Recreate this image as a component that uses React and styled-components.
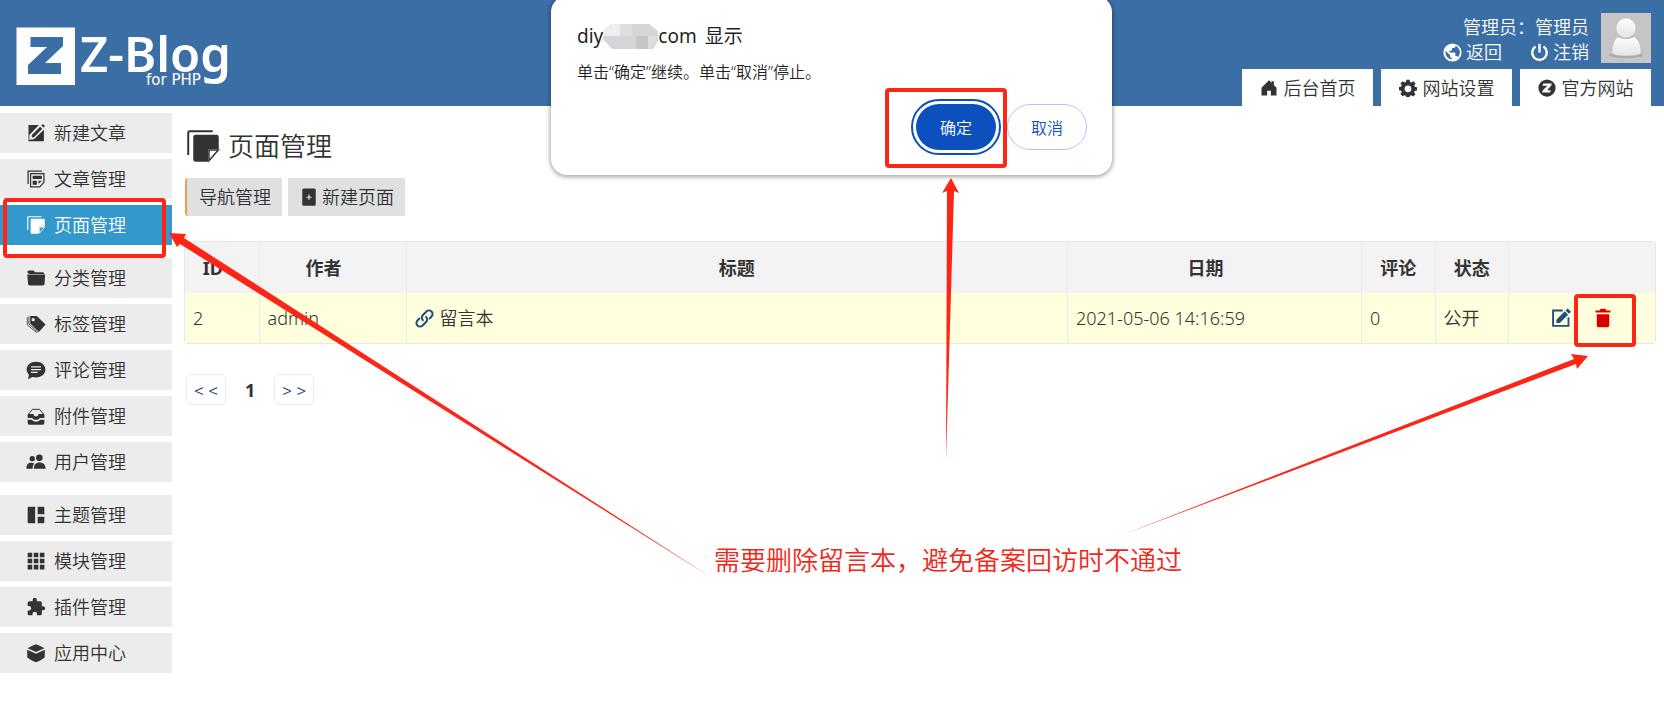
import styled, { createGlobalStyle } from 'styled-components'

const GlobalStyle = createGlobalStyle`
  * {
    box-sizing: border-box;
  }

  body {
    margin: 0;
    background: #FFFFFF;
    color: #333333;
    font-family: "Noto Sans", "Noto Sans CJK SC", sans-serif;
    font-size: 18px;
    font-weight: 350;
    line-height: 26px;
  }

  a {
    color: inherit;
    text-decoration: none;
  }
`

const Page = styled.div`
  position: relative;
  overflow: hidden;
  padding-bottom: 36px;
`

const Header = styled.header`
  display: flex;
  justify-content: space-between;
  height: 106px;
  padding: 13px 13px 0 16px;
  background: #3A6EA5;
  color: #FFFFFF;
`

const Logo = styled.a`
  svg {
    display: block;
  }
`

const HeaderSide = styled.div`
  display: flex;
  flex-direction: column;
  align-items: flex-end;
  justify-content: space-between;
`

const User = styled.div`
  display: flex;
  gap: 12px;

  .info {
    display: flex;
    flex-direction: column;
    align-items: flex-end;
    padding-top: 2px;
    line-height: 25px;
  }

  .links {
    display: flex;
    gap: 28px;
  }

  .links a {
    display: flex;
    align-items: center;
    gap: 4px;
  }
`

const TopMenu = styled.nav`
  display: flex;
  gap: 8px;

  a {
    display: flex;
    align-items: center;
    justify-content: center;
    gap: 6px;
    width: 131px;
    height: 37px;
    background: #FFFFFF;
    color: #333333;
  }
`

const Body = styled.div`
  display: flex;
  gap: 12px;
`

const Sidebar = styled.nav`
  display: flex;
  flex-direction: column;
  flex: none;
  gap: 13px;
  width: 172px;
  padding-top: 7px;
`

const MenuGroup = styled.div`
  display: flex;
  flex-direction: column;
  gap: 6px;
`

const MenuItem = styled.a`
  position: relative;
  display: flex;
  align-items: center;
  gap: 8px;
  height: 40px;
  padding-left: 26px;
  background: ${props => props.$active ? '#3399CC' : '#ECECEC'};
  && {
    color: ${props => props.$active ? '#FFFFFF' : '#333333'};
  }
`

const Main = styled.main`
  flex: 1;
  min-width: 0;
  padding: 20px 8px 0 0;
`

const Title = styled.h1`
  display: flex;
  align-items: center;
  gap: 7px;
  margin: 0 0 12px;
  padding-left: 1px;
  font-size: 26px;
  font-weight: 350;
  line-height: 40px;
`

const SubMenu = styled.div`
  display: flex;
  gap: 6px;
  margin-bottom: 25px;
  padding-left: 1px;
`

const SubButton = styled.a`
  display: flex;
  align-items: center;
  gap: 4px;
  height: 38px;
  padding: 0 11px 0 12px;
  background: #DEE0E2;
  border-left: ${props => props.$current ? '2px solid #EDA04A' : '0'};
  border-radius: ${props => props.$current ? '3px 0 0 3px' : '0'};
`

const Table = styled.table`
  width: 100%;
  table-layout: fixed;
  border-collapse: separate;
  border-spacing: 0;
  border: 1px solid #E8E8E8;
  border-radius: 3px;

  th, td {
    height: 50px;
    padding: 0 8px;
    border-left: 1px solid #EBEBEB;
  }

  th:first-child, td:first-child {
    border-left: 0;
  }

  th {
    height: 51px;
    background: #F3F3F3;
    font-weight: 700;
    text-align: center;
  }

  th.sortable {
    padding-right: 26px;
  }

  td {
    background: #FFFFDD;
  }

  .title {
    display: flex;
    align-items: center;
    gap: 6px;
  }

  .actions {
    display: flex;
    justify-content: center;
    gap: 22px;
  }

  .actions a {
    position: relative;
    display: flex;
  }
`

const Pager = styled.nav`
  display: flex;
  align-items: center;
  gap: 19px;
  margin-top: 30px;
  padding-left: 2px;

  a {
    width: 40px;
    height: 31px;
    border: 1px solid #EBEBEB;
    border-radius: 5px;
    color: #1D4C7D;
    font-family: "Open Sans", sans-serif;
    font-size: 17px;
    font-weight: 400;
    line-height: 31px;
    text-align: center;
  }

  strong {
    font-weight: 700;
  }
`

const Dialog = styled.section`
  position: absolute;
  top: -4px;
  left: 50%;
  display: flex;
  flex-direction: column;
  width: 561px;
  height: 179px;
  margin-left: -281px;
  padding: 27px 25px 25px 26px;
  background: #FFFFFF;
  border-radius: 16px;
  box-shadow: 0 1px 4px 1px rgba(0, 0, 0, 0.35);
  color: #1F1F1F;

  h2 {
    display: flex;
    align-items: center;
    margin: 0;
    font-size: 19px;
    font-weight: 400;
    line-height: 26px;
  }

  h2 span {
    margin-left: 8px;
  }

  p {
    margin: 11px 0 0;
    font-size: 16px;
    line-height: 24px;
  }
`

const DialogButtons = styled.div`
  display: flex;
  justify-content: flex-end;
  gap: 11px;
  margin-top: auto;
`

const DialogButton = styled.button`
  position: relative;
  width: 80px;
  height: 46px;
  padding: 0;
  background: ${props => props.$primary ? '#0B50BC' : '#FFFFFF'};
  border: ${props => props.$primary ? '0' : '1px solid #A8C7FA'};
  border-radius: 23px;
  outline: ${props => props.$primary ? '2px solid #0B50BC' : 'none'};
  outline-offset: 3px;
  color: ${props => props.$primary ? '#FFFFFF' : '#0B50BC'};
  font-family: inherit;
  font-size: 16px;
  font-weight: 350;
`

/* red frame drawn around the control it sits in */
const Mark = styled.span`
  position: absolute;
  inset: ${props => props.$inset};
  z-index: 2;
  border: 4px solid #FD2516;
  border-radius: 4px;
  pointer-events: none;
`

const Arrows = styled.svg`
  position: absolute;
  top: 0;
  left: 0;
  z-index: 3;
  pointer-events: none;
`

const Note = styled.p`
  position: absolute;
  top: 541px;
  left: 714px;
  margin: 0;
  color: #F0281A;
  font-size: 26px;
  line-height: 38px;
  white-space: nowrap;
`

const icons = {
  edit: <><path d="M3 2.500h12.500L4 14.500V20l5.500-.5L21.500 8v14H3z" /><path d="M7 14.500 17 4.500l2.500 2.500L9.500 17H7zM18.500 3l1.800-1.800 2.500 2.500L21 5.500z" /></>,
  posts: <><path d="M2.500 18V2.500H19M5.500 5.500h16V16l-5 5.500h-11z" fill="none" stroke="currentColor" strokeWidth="1.500" /><path d="M8 8h11v4H8zM8 14h5v5H8zM15 14h4l-4 4z" /></>,
  pages: <><path d="M1.500 18V3A1.500 1.500 0 0 1 3 1.500h15.500v1.300H3.300a.5.5 0 0 0-.5.5V18z" /><path d="M7 4.500h14A1.500 1.500 0 0 1 22.500 6v8h-7v8.500H7A1.500 1.500 0 0 1 5.500 21V6A1.500 1.500 0 0 1 7 4.500z" /><path d="M16 14.700h6.200L16 21.800z" fill="none" stroke="currentColor" strokeWidth="1" /></>,
  folder: <path d="M1.500 5a2 2 0 0 1 2-2H9l2 2h9a2 2 0 0 1 2 2v.3H3v-1zM1.500 7.800h21.500l-.7 11.200a2 2 0 0 1-2 2H4.500a2 2 0 0 1-2-2z" />,
  tag: <><path fillRule="evenodd" d="M5 2.500h8l10.500 10-8 9L5 11.500zM8.700 4.800a2 2 0 1 0 0 4 2 2 0 0 0 0-4z" /><path d="M1.500 4v9L13 22.500M3.500 3v9L14.500 22" fill="none" stroke="currentColor" /></>,
  comment: <path fillRule="evenodd" d="M12 2C5.500 2 .8 6 .8 11.500c0 2.600 1 4.500 2.700 6.200L2.500 23l5.300-2.500c1.300.3 2.700.5 4.200.5 6.500 0 11.200-4 11.200-9.500S18.500 2 12 2zM6 7.500h12V9H6zm0 3.300h12v1.500H6zM6 14h8v1.500H6z" />,
  tray: <><path d="M3 10 7.500 4h9l4.500 6" fill="none" stroke="currentColor" strokeWidth="1.200" /><path d="M2 9.500h7c0 4 6 4 6 0h7v4.800h-5.500c-1.500 3-7.500 3-9 0H2z" /><path d="M2 16.500h5c2 3 8 3 10 0h5v4a2 2 0 0 1-2 2H4a2 2 0 0 1-2-2z" /></>,
  users: <><circle cx="7.500" cy="8" r="3.200" /><circle cx="16" cy="7" r="4" /><path d="M.5 20c0-5 2-7 6-7 1.500 0 2.500.3 3.300 1C8.500 15.500 8 17.500 8 20zM9.500 20c0-5 2-7.500 6.700-7.500S23.500 15 23.500 20z" /></>,
  theme: <path d="M2 3.500A1.500 1.500 0 0 1 3.500 2H11v20H3.500A1.500 1.500 0 0 1 2 20.500zM14 2h6.500A1.500 1.500 0 0 1 22 3.500V11h-8zM14 14h8v6.500a1.500 1.500 0 0 1-1.500 1.500H14z" />,
  grid: <path d="M2 2h5.500v5.500H2zM9.300 2h5.500v5.500H9.300zM16.600 2h5.500v5.500h-5.500zM2 9.300h5.500v5.500H2zM9.300 9.300h5.500v5.500H9.300zM16.600 9.300h5.500v5.500h-5.500zM2 16.600h5.500v5.500H2zM9.300 16.600h5.500v5.500H9.300zM16.600 16.600h5.500v5.500h-5.500z" />,
  plugin: <path d="M20.500 11H19V7a2 2 0 0 0-2-2h-4V3.500a2.500 2.500 0 0 0-5 0V5H4a2 2 0 0 0-2 2v3.800h1.500a2.700 2.700 0 0 1 0 5.400H2V20c0 1.100.9 2 2 2h3.800v-1.500a2.700 2.700 0 0 1 5.400 0V22H17a2 2 0 0 0 2-2v-4h1.500a2.500 2.500 0 0 0 0-5z" />,
  box: <path d="M7.500 3.200 12 1.500l4.500 1.700 5.500 3-10 4.600L2 6.200zM1.500 8 12 13l10.500-5v9.500L17 21l-5 2-5-2-5.500-3.500z" />,
  home: <path d="M12 1.500 2 11.500V22h7.500v-6.500h5V22H22V11.500L18.500 8V3h-3v2z" />,
  gear: <path fillRule="evenodd" d="m9.800 1h4.400l.6 3 1.700.8 2.600-1.800 3 3-1.800 2.600.7 1.800 3 .6v4.400l-3 .6-.7 1.700 1.700 2.600-3 3-2.600-1.700-1.700.7-.6 3H9.800l-.6-3-1.700-.7L4.900 23l-3-3 1.700-2.600-.7-1.700-3-.6v-4.400l3-.6.7-1.800L1.900 6l3-3 2.600 1.800L9.200 4zM12 8.500a4.500 4.500 0 1 0 0 9 4.500 4.500 0 0 0 0-9z" />,
  zblog: <path fillRule="evenodd" d="M12 .5a11.500 11.500 0 1 0 0 23 11.500 11.500 0 0 0 0-23zM7 6h11.500L17.500 9l-5.500 6h5L16 18H5.500l1-3 6-6H6z" />,
  globe: <path fillRule="evenodd" d="M12 .5a11.500 11.500 0 1 0 0 23 11.500 11.500 0 0 0 0-23zm-1 20.300a9 9 0 0 1-7.600-10.900L9 15.500v1.200c0 1.200.8 2 2 2zm7.800-2.700c-.3-1-1.200-1.600-2.200-1.600h-1v-3.300c0-.7-.5-1.200-1.200-1.200H8V9.700h2.200c.7 0 1.200-.5 1.200-1.100V6.300h2.200c1.200 0 2.200-1 2.200-2.200v-.5a9 9 0 0 1 3 14.500z" />,
  power: <><path d="M7 4.500a9.200 9.200 0 1 0 10 0" fill="none" stroke="currentColor" strokeWidth="3" /><path d="M10.500 1h3v11h-3z" /></>,
  addPage: <path fillRule="evenodd" d="M5 .5h14a2 2 0 0 1 2 2v19a2 2 0 0 1-2 2H5a2 2 0 0 1-2-2v-19a2 2 0 0 1 2-2zm6.200 8.300v2.700H8.500v1.600h2.700v2.700h1.600v-2.700h2.700v-1.600h-2.700V8.800z" />,
  link: <g fill="none" stroke="currentColor" strokeWidth="2.500" strokeLinecap="round"><path d="M10 14a4.500 4.500 0 0 1 0-6.400l4.500-4.500a4.500 4.500 0 0 1 6.400 6.400L18.500 12" /><path d="M14 10a4.500 4.500 0 0 1 0 6.400l-4.500 4.500a4.500 4.500 0 0 1-6.400-6.400L5.500 12" /></g>,
  compose: <><path d="M14 3H2.500v18.500H21V11" fill="none" stroke="currentColor" strokeWidth="2.200" /><path d="M6.500 14 16.500 4l4 4-10 10h-4zM17.500 3 20 .5l4 4L21.500 7z" /></>,
  trash: <path d="M3 3h5l1-2h6l1 2h5v2.500H3zM4.500 7.500h15V21a2 2 0 0 1-2 2h-11a2 2 0 0 1-2-2z" />
}

function Icon({ name, size = 20, color = 'currentColor' }) {
  return (
    <svg width={size} height={size} viewBox="0 0 24 24" fill="currentColor" color={color} aria-hidden="true">
      {icons[name]}
    </svg>
  )
}

const menu = [
  [['edit', '新建文章'], ['posts', '文章管理'], ['pages', '页面管理']],
  [['folder', '分类管理'], ['tag', '标签管理'], ['comment', '评论管理'], ['tray', '附件管理'], ['users', '用户管理']],
  [['theme', '主题管理'], ['grid', '模块管理'], ['plugin', '插件管理'], ['box', '应用中心']]
]

function BlogLogo() {
  return (
    <svg width="230" height="92" viewBox="0 0 230 92" fill="#FFFFFF" role="img" aria-label="Z-Blog for PHP">
      <path fillRule="evenodd" d="M.5 14.500h58.500v57.500H.5zM14.500 24v10h16.500L12 52v9h33V50H29l18-17v-9z" />
      <text x="64" y="59" fontSize="49" fontWeight="600" fontFamily="Noto Sans, sans-serif">Z-Blog</text>
      <text x="130" y="72" fontSize="15" fontWeight="400" fontFamily="DejaVu Sans, sans-serif">for PHP</text>
    </svg>
  )
}

function Avatar() {
  return (
    <svg width="50" height="50" viewBox="0 0 50 50" role="img" aria-label="管理员">
      <defs>
        <linearGradient id="body" x1="0" y1="0" x2="0" y2="1">
          <stop offset="0" stopColor="#FFFFFF" />
          <stop offset="1" stopColor="#E4E4E4" />
        </linearGradient>
      </defs>
      <path fill="#C5C5C5" d="M0 0h50v50H0z" />
      <ellipse cx="25" cy="42" rx="17" ry="3" fill="#A9A9A9" />
      <path d="M11 40c0-11 3-18 14-18s15 7 15 18c0 4-29 4-29 0z" fill="url(#body)" stroke="#B5B5B5" strokeWidth=".5" />
      <ellipse cx="25" cy="23" rx="8" ry="3" fill="#BBBBBB" />
      <circle cx="25" cy="15" r="10" fill="url(#body)" stroke="#B5B5B5" strokeWidth=".5" />
    </svg>
  )
}

function Mosaic() {
  return (
    <svg width="55" height="25" viewBox="0 0 55 25" aria-hidden="true">
      <path d="M8 0h38l9 7v10l-5 8H9L0 15V7z" fill="#D6D5D8" />
      <path d="M8 0h9v12H0V7z" fill="#EEEDEF" />
      <path d="M17 0h12v12H17zM41 12h12v6l-5 7h-7z" fill="#DEDEE0" />
      <path d="M33 12h12v13H33z" fill="#C8C4C8" />
    </svg>
  )
}

export default function App() {
  return (
    <Page>
      <GlobalStyle />
      <Header>
        <Logo href="#"><BlogLogo /></Logo>
        <HeaderSide>
          <User>
            <div className="info">
              <div>管理员：管理员</div>
              <div className="links">
                <a href="#"><Icon name="globe" size={19} /> 返回</a>
                <a href="#"><Icon name="power" size={19} /> 注销</a>
              </div>
            </div>
            <Avatar />
          </User>
          <TopMenu>
            <a href="#"><Icon name="home" size={18} /> 后台首页</a>
            <a href="#"><Icon name="gear" size={18} /> 网站设置</a>
            <a href="#"><Icon name="zblog" size={18} /> 官方网站</a>
          </TopMenu>
        </HeaderSide>
      </Header>

      <Body>
        <Sidebar>
          {menu.map((group, i) => (
            <MenuGroup key={i}>
              {group.map(([icon, label]) => (
                <MenuItem key={icon} href="#" $active={icon === 'pages'}>
                  <Icon name={icon} />
                  {label}
                  {icon === 'pages' && <Mark $inset="-7px 6px -13px 3px" />}
                </MenuItem>
              ))}
            </MenuGroup>
          ))}
        </Sidebar>

        <Main>
          <Title><Icon name="pages" size={36} /> 页面管理</Title>
          <SubMenu>
            <SubButton href="#" $current>导航管理</SubButton>
            <SubButton href="#"><Icon name="addPage" size={18} /> 新建页面</SubButton>
          </SubMenu>

          <Table>
            <colgroup>
              <col width="5%" />
              <col width="10%" />
              <col width="45%" />
              <col width="20%" />
              <col width="5%" />
              <col width="5%" />
              <col width="10%" />
            </colgroup>
            <thead>
              <tr>
                <th className="sortable">ID</th>
                <th className="sortable">作者</th>
                <th>标题</th>
                <th className="sortable">日期</th>
                <th>评论</th>
                <th>状态</th>
                <th></th>
              </tr>
            </thead>
            <tbody>
              <tr>
                <td>2</td>
                <td>admin</td>
                <td><a className="title" href="#"><Icon name="link" size={19} color="#1D4C7D" /> 留言本</a></td>
                <td>2021-05-06 14:16:59</td>
                <td>0</td>
                <td>公开</td>
                <td>
                  <div className="actions">
                    <a href="#" aria-label="编辑"><Icon name="compose" color="#1D4C7D" /></a>
                    <a href="#" aria-label="删除">
                      <Icon name="trash" color="#D60000" />
                      <Mark $inset="-14px -23px -19px -19px" />
                    </a>
                  </div>
                </td>
              </tr>
            </tbody>
          </Table>

          <Pager>
            <a href="#">&lt; &lt;</a>
            <strong>1</strong>
            <a href="#">&gt; &gt;</a>
          </Pager>
        </Main>
      </Body>

      <Dialog role="dialog" aria-label="显示">
        <h2>diy<Mosaic />com <span>显示</span></h2>
        <p>单击“确定”继续。单击“取消”停止。</p>
        <DialogButtons>
          <DialogButton $primary>
            确定
            <Mark $inset="-16px -11px -18px -31px" />
          </DialogButton>
          <DialogButton>取消</DialogButton>
        </DialogButtons>
      </Dialog>

      <Arrows width="1664" height="710" viewBox="0 0 1664 710" fill="#FD2516" aria-hidden="true">
        <path d="M169 233l17 1-2 4L712 578 180 244l-3 3z" />
        <path d="M951 178l8 15-5-2L946 460 947 191l-5 2z" />
        <path d="M1588 356l-11 13-1-5L1122 535 1574 359l-3-5z" />
      </Arrows>
      <Note>需要删除留言本，避免备案回访时不通过</Note>
    </Page>
  )
}
